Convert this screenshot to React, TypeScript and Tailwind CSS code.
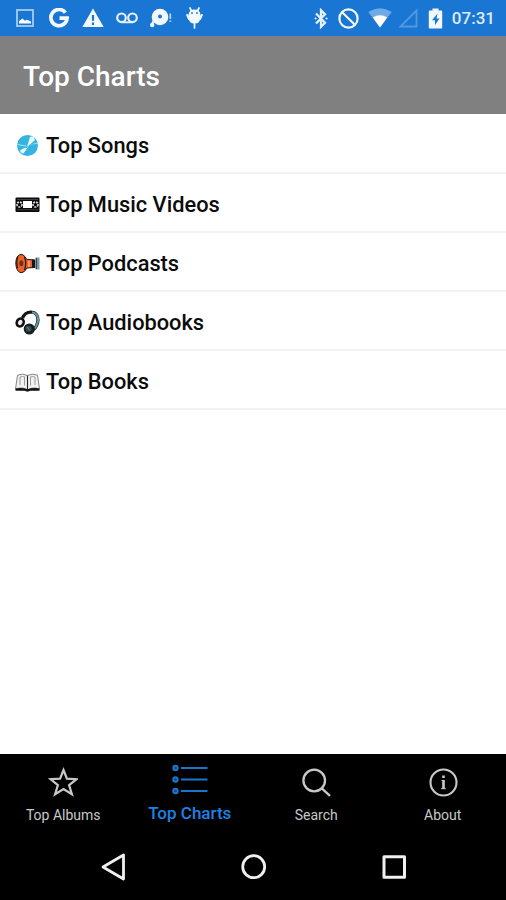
import type { ReactNode } from "react";

const DiscIcon = () => (
  <svg width="25" height="25" viewBox="0 0 25 25">
    <circle cx="12.5" cy="12.5" r="10.5" fill="#34b4df" />
    <path d="M12 13.5L15 4Q16 2.8 18.8 4.2L20 7L14.5 12L8.5 20.5Q5.5 20 4.8 17.5Z" fill="#eaf8fd" />
    <path d="M2.5 11.5L11 13M14 12L22.5 10" stroke="#a5e0f2" strokeWidth="1.1" />
    <path d="M8 14.5Q11 16 14.5 12.5Q16 10.5 19 11" fill="none" stroke="#34b4df" strokeWidth="1" />
  </svg>
);

const TapeIcon = () => (
  <svg width="25" height="25" viewBox="0 0 25 25">
    <rect x="0.5" y="5.5" width="24" height="14.5" rx="1" fill="#0b0b0b" />
    <rect x="8" y="9" width="9" height="7" fill="#fff" />
    <circle cx="4.5" cy="12.5" r="2.5" fill="none" stroke="#ddd" strokeWidth="1.7" strokeDasharray="2 1" />
    <circle cx="20.5" cy="12.5" r="2.5" fill="none" stroke="#ddd" strokeWidth="1.7" strokeDasharray="2 1" />
    <path d="M2 7.5H23M2 17.7H23" stroke="#555" strokeWidth="0.7" />
  </svg>
);

const MegaphoneIcon = () => (
  <svg width="25" height="25" viewBox="0 0 25 25">
    <path d="M6 3.2Q9.5 3.5 11.5 8.2L19 9V16.5L12 17Q9.5 21.8 6 21.8Q1 20.5 0.8 12Q1 4.5 6 3.2Z" fill="#e8622a" stroke="#26140c" strokeWidth="1" />
    <path d="M3 5.5Q1 10 2.5 17M9.5 6Q12 12 9.5 19" fill="none" stroke="#351a0e" strokeWidth="1.3" />
    <ellipse cx="6.3" cy="12.3" rx="2.1" ry="3" fill="#783018" />
    <path d="M14 9.5V16" stroke="#f4b492" strokeWidth="1.3" />
    <rect x="17" y="8.5" width="3.5" height="8.5" fill="#171717" />
    <path d="M20.3 6.5H24.5V18.5H20.3Z" fill="#7d9ba7" />
    <path d="M21.5 7V18" stroke="#35464e" strokeWidth="1" />
  </svg>
);

const HeadphonesIcon = () => (
  <svg width="25" height="25" viewBox="0 0 25 25">
    <path d="M7.5 8Q10 2.2 16 2Q23 2.5 23 10Q22.5 16 18.5 19.5" fill="none" stroke="#101718" strokeWidth="3.2" />
    <path d="M17 2.3Q24 4 23 11Q22 16 19.5 18.5" fill="none" stroke="#659aa5" strokeWidth="2" />
    <ellipse cx="5.2" cy="12.5" rx="3.4" ry="4" fill="#eee" stroke="#101010" strokeWidth="2.6" transform="rotate(25 5.2 12.5)" />
    <circle cx="14.3" cy="19" r="5.6" fill="#15201f" />
    <circle cx="13.5" cy="18.8" r="3" fill="#314e4a" />
    <path d="M12 17L15 20.5" stroke="#779890" strokeWidth="0.8" />
  </svg>
);

const BookIcon = () => (
  <svg width="25" height="25" viewBox="0 0 25 25">
    <path d="M2.5 6.2Q8 4 12.5 6.5Q17 4 22.5 6.2L24.5 20Q17 17.5 12.5 21Q8 17.5 0.5 20Z" fill="#f1f1f1" stroke="#777" strokeWidth="0.9" />
    <path d="M12.5 6.5V20.5" stroke="#222" strokeWidth="1.1" />
    <path d="M5 8V16M9.5 7.5V16.5M15.5 7.5V16.5M20 8V16" stroke="#999" strokeWidth="1" />
    <path d="M5 8Q7.5 7 9.5 8M15.5 8Q18 7 20 8" fill="none" stroke="#999" strokeWidth="0.9" />
    <path d="M0.5 19.5Q7 18.4 12.5 20.3Q18 18.4 24.5 19.5V21.7H15Q12.5 23.5 10 21.7H0.5Z" fill="#111" />
  </svg>
);

const rows: { label: string; icon: ReactNode }[] = [
  { label: "Top Songs", icon: <DiscIcon /> },
  { label: "Top Music Videos", icon: <TapeIcon /> },
  { label: "Top Podcasts", icon: <MegaphoneIcon /> },
  { label: "Top Audiobooks", icon: <HeadphonesIcon /> },
  { label: "Top Books", icon: <BookIcon /> },
];

function StatusBar() {
  return (
    <div className="h-9 bg-[#1976d2] flex items-center text-white shrink-0">
      <svg className="ml-4" width="18" height="18" viewBox="0 0 18 18">
        <rect x="1" y="1" width="16" height="16" fill="none" stroke="#a9cdef" strokeWidth="1.8" />
        <path d="M3 14.5V12L6.5 9.5L9 11.8L11 10.8L15 12.5V14.5Z" fill="#fff" />
      </svg>
      <svg className="ml-[15px]" width="20" height="20" viewBox="0 0 20 20">
        <path d="M16.4 4.6A8.1 8.1 0 1 0 18.1 10.2H10.5" fill="none" stroke="#f3f8fd" strokeWidth="3.7" />
      </svg>
      <svg className="ml-[13px]" width="22" height="20" viewBox="0 0 22 20">
        <path d="M11 0.5L21.7 19H0.3Z" fill="#f3f8fd" />
        <path d="M11 7V12.8M11 14.5V17" stroke="#1976d2" strokeWidth="2.2" />
      </svg>
      <svg className="ml-3" width="22" height="12" viewBox="0 0 22 12">
        <circle cx="5.5" cy="5.8" r="4.3" fill="none" stroke="#e5f0fb" strokeWidth="2.2" />
        <circle cx="16.5" cy="5.8" r="4.3" fill="none" stroke="#e5f0fb" strokeWidth="2.2" />
        <path d="M5.5 10.3H16.5" stroke="#e5f0fb" strokeWidth="1.9" />
      </svg>
      <svg className="ml-3" width="22" height="20" viewBox="0 0 22 20">
        <circle cx="10" cy="9" r="8.3" fill="#f3f8fd" />
        <circle cx="10" cy="8.5" r="2" fill="#1976d2" />
        <path d="M3.5 13L1.5 17" stroke="#f3f8fd" strokeWidth="2" />
        <circle cx="2.2" cy="17" r="2.2" fill="#f3f8fd" />
        <path d="M20.3 5.5V11M20.3 12.5V14" stroke="#b5d4f2" strokeWidth="1.7" />
      </svg>
      <svg className="ml-[14px]" width="17" height="22" viewBox="0 0 17 22">
        <path d="M4 1L5.5 4M13 1L11.5 4M8.5 14V21" stroke="#f3f8fd" strokeWidth="1.7" strokeLinecap="round" />
        <path d="M2.5 8Q3 2.5 8.5 2.5Q14 2.5 14.5 8V11Q14 16.5 8.5 16.5Q3 16.5 2.5 11Z" fill="#f3f8fd" />
        <path d="M1.2 8L3 12M15.8 8L14 12" stroke="#f3f8fd" strokeWidth="2" strokeLinecap="round" />
        <circle cx="6" cy="6" r="0.9" fill="#1976d2" />
        <circle cx="11" cy="6" r="0.9" fill="#1976d2" />
      </svg>

      <div className="ml-auto flex items-center">
        <svg width="14" height="21" viewBox="0 0 14 21">
          <path d="M2 5.5L11 14.7L7 18.8V2.2L11 6.2L2 15.5" fill="none" stroke="#e5f0fb" strokeWidth="2.3" />
          <path d="M1.5 10.5h0.1M12.5 10.5h0.1" stroke="#e5f0fb" strokeWidth="2" strokeLinecap="round" />
        </svg>
        <svg className="ml-[10px]" width="21" height="21" viewBox="0 0 21 21">
          <circle cx="10.5" cy="10.5" r="9.1" fill="none" stroke="#f3f8fd" strokeWidth="2.2" />
          <path d="M4.2 4.2L16.8 16.8" stroke="#f3f8fd" strokeWidth="2.2" />
        </svg>
        <svg className="ml-[9px]" width="24" height="20" viewBox="0 0 24 20">
          <path d="M0.3 4Q12-3.4 23.7 4L12 19.5Z" fill="#6faae5" />
          <path d="M4.8 9.5Q12 5.2 19.2 9.5L12 19.5Z" fill="#fff" />
        </svg>
        <svg className="ml-[6px]" width="20" height="20" viewBox="0 0 20 20">
          <path d="M2.5 18.5L18.5 2.5V18.5Z" fill="none" stroke="#5397df" strokeWidth="1.8" />
        </svg>
        <svg className="ml-[10px]" width="15" height="21" viewBox="0 0 15 21">
          <path d="M4.5 0.5H10.5V2.5H13.2Q14.2 2.5 14.2 3.5V19.5Q14.2 20.5 13.2 20.5H1.8Q0.8 20.5 0.8 19.5V3.5Q0.8 2.5 1.8 2.5H4.5Z" fill="#f3f8fd" />
          <path d="M9.5 5.5L4 12.3H7V17L11.5 10.5H8.5Z" fill="#1976d2" />
        </svg>
        <span className="ml-[9px] mr-[11px] text-[17px] leading-5 font-medium text-[#dceafa] whitespace-nowrap">07:31</span>
      </div>
    </div>
  );
}

function TabBar() {
  return (
    <div className="h-20 grid grid-cols-4 text-[#c8c8c8] text-[14px] leading-5">
      <div className="flex flex-col items-center pt-[13px]">
        <svg width="30" height="30" viewBox="0 0 30 30" fill="none" stroke="#c8c8c8" strokeWidth="2.2">
          <path d="M15.5 3L18.9 11.7L28.5 12.2L21.1 18.2L23.9 27.2L15.5 22.1L7.1 27.2L9.9 18.2L2.5 12.2L12.1 11.7Z" />
        </svg>
        <span className="mt-2">Top Albums</span>
      </div>
      <div className="flex flex-col items-center pt-[10px] text-[#1c82e4]">
        <svg width="36" height="31" viewBox="0 0 36 31" fill="none" stroke="#1976cf" strokeWidth="2">
          <circle cx="3.5" cy="4" r="2.2" fill="#0d4275" />
          <circle cx="3.5" cy="15.5" r="2.2" fill="#0d4275" />
          <circle cx="3.5" cy="27" r="2.2" fill="#0d4275" />
          <path d="M9 4H35.5M9 15.5H35.5M9 27H35.5" />
        </svg>
        <span className="mt-2 text-[17px] font-medium">Top Charts</span>
      </div>
      <div className="flex flex-col items-center pt-[13px]">
        <svg width="30" height="30" viewBox="0 0 30 30" fill="none" stroke="#c8c8c8" strokeWidth="2.3">
          <circle cx="13.2" cy="13.5" r="10.8" />
          <path d="M20.8 21.3L29 28.8" />
        </svg>
        <span className="mt-2">Search</span>
      </div>
      <div className="flex flex-col items-center pt-[13px]">
        <svg width="30" height="30" viewBox="0 0 30 30" fill="none" stroke="#c8c8c8" strokeWidth="2.1">
          <circle cx="15.5" cy="15.5" r="13" />
          <path d="M15.5 13V22M15.5 8.5V11" strokeWidth="2.6" />
          <path d="M13.5 13.5H15.5M13.2 21.7H17.8" strokeWidth="1" />
        </svg>
        <span className="mt-2">About</span>
      </div>
    </div>
  );
}

export default function App() {
  return (
    <div className="h-[900px] w-[506px] flex flex-col bg-white overflow-hidden font-['Roboto',sans-serif]">
      <StatusBar />
      <header className="h-[78px] bg-[#808080] flex items-center pl-[23px] pt-1 shrink-0">
        <h1 className="text-[28px] leading-8 font-medium text-white">Top Charts</h1>
      </header>

      <main className="flex-1 pt-px">
        {rows.map((row) => (
          <div key={row.label} className="h-[59px] flex items-center pl-[15px] pt-[3px] border-b-2 border-[#f3f3f3]">
            {row.icon}
            <span className="ml-[6px] pt-px text-[21.8px] leading-7 font-medium text-[#0c0c0c]">{row.label}</span>
          </div>
        ))}
      </main>

      <footer className="h-[146px] bg-black shrink-0">
        <TabBar />
        <div className="h-[66px] flex items-center pl-[100px]">
          <svg width="27" height="28" viewBox="0 0 27 28" fill="none" stroke="#f0f0f0" strokeWidth="2.8" strokeLinejoin="round">
            <path d="M23.5 2V26L3 14Z" />
          </svg>
          <svg className="ml-[113px]" width="28" height="28" viewBox="0 0 28 28" fill="none" stroke="#f0f0f0" strokeWidth="2.8">
            <circle cx="13.7" cy="13.7" r="11" />
          </svg>
          <svg className="ml-[112px]" width="28" height="28" viewBox="0 0 28 28" fill="none" stroke="#f0f0f0" strokeWidth="3" strokeLinejoin="round">
            <rect x="4" y="3.7" width="20.5" height="20.5" />
          </svg>
        </div>
      </footer>
    </div>
  );
}
